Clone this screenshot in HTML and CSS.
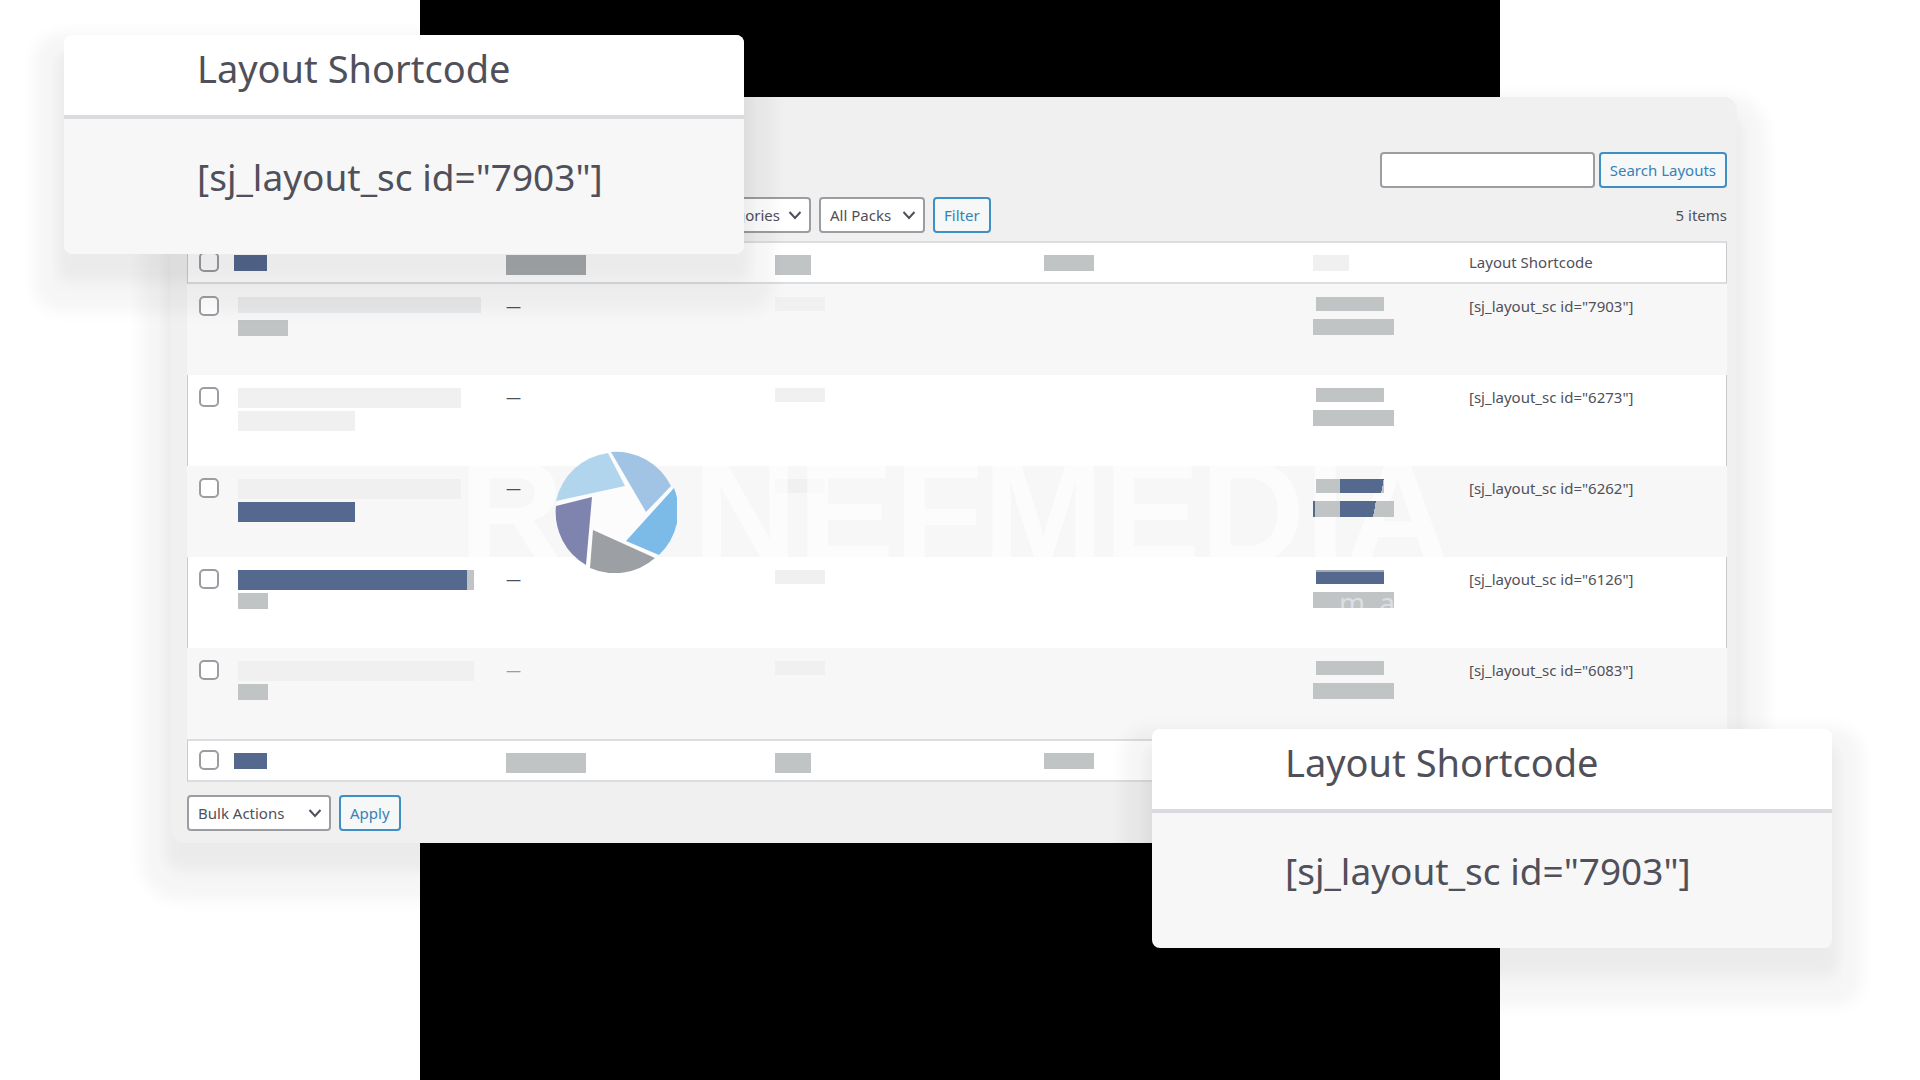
FILE: index.html
```html
<!DOCTYPE html>
<html lang="en">
<head>
  <meta charset="UTF-8" />
  <meta name="viewport" content="width=device-width, initial-scale=1" />
  <title>Layouts</title>
  <link rel="stylesheet" href="styles.css">
</head>
<body>
  <div class="stage">
    <main class="panel">
      <form class="search-box">
        <input type="search" class="search-input" aria-label="Search Layouts">
        <button type="button" class="button">Search Layouts</button>
      </form>

      <div class="tablenav top">
        <div class="actions">
          <select class="select select-categories" aria-label="Filter by category">
            <option>All Categories</option>
          </select>
          <select class="select select-packs" aria-label="Filter by pack">
            <option>All Packs</option>
          </select>
          <button type="button" class="button">Filter</button>
        </div>
        <span class="item-count">5 items</span>
      </div>

      <div class="table-wrap">
        <table class="layouts">
          <colgroup>
            <col class="col-check">
            <col class="col-title">
            <col class="col-main">
            <col class="col-main">
            <col class="col-main">
            <col class="col-date">
            <col>
          </colgroup>
          <thead>
            <tr>
              <td><input type="checkbox" class="check" aria-label="Select all"></td>
              <th><span class="bar blue h16 w33"></span></th>
              <th><span class="bar dark h20 w80"></span></th>
              <th><span class="bar gray h20 w36"></span></th>
              <th><span class="bar gray h16 w50"></span></th>
              <th><span class="bar light h16 w36"></span></th>
              <th>Layout Shortcode</th>
            </tr>
          </thead>
          <tbody>
            <tr>
              <td><input type="checkbox" class="check" aria-label="Select layout 7903"></td>
              <td class="title"><span class="bar shade h16 w243"></span><span class="bar gray h16 w50 low"></span></td>
              <td>—</td>
              <td><span class="bar light h14 w50"></span></td>
              <td></td>
              <td class="date"><span class="bar gray h14 w68"></span><span class="bar gray h16 w81"></span></td>
              <td>[sj_layout_sc id="7903"]</td>
            </tr>
            <tr>
              <td><input type="checkbox" class="check" aria-label="Select layout 6273"></td>
              <td class="title"><span class="bar light h20 w223"></span><span class="bar light h20 w117"></span></td>
              <td>—</td>
              <td><span class="bar light h14 w50"></span></td>
              <td></td>
              <td class="date"><span class="bar gray h14 w68"></span><span class="bar gray h16 w81"></span></td>
              <td>[sj_layout_sc id="6273"]</td>
            </tr>
            <tr>
              <td><input type="checkbox" class="check" aria-label="Select layout 6262"></td>
              <td class="title"><span class="bar light h20 w223"></span><span class="bar blue h20 w117"></span></td>
              <td>—</td>
              <td><span class="bar light h14 w50"></span></td>
              <td></td>
              <td class="date"><span class="bar split-a h14 w68"></span><span class="bar split-b h16 w81"></span></td>
              <td>[sj_layout_sc id="6262"]</td>
            </tr>
            <tr>
              <td><input type="checkbox" class="check" aria-label="Select layout 6126"></td>
              <td class="title"><span class="bar split-end h20 w236"></span><span class="bar gray h16 w30"></span></td>
              <td>—</td>
              <td><span class="bar light h14 w50"></span></td>
              <td></td>
              <td class="date"><span class="bar split-top h14 w68"></span><span class="bar gray h16 w81 tagline"><span>m</span><span>a</span></span></td>
              <td>[sj_layout_sc id="6126"]</td>
            </tr>
            <tr>
              <td><input type="checkbox" class="check" aria-label="Select layout 6083"></td>
              <td class="title"><span class="bar light h20 w236"></span><span class="bar gray h16 w30"></span></td>
              <td class="muted">—</td>
              <td><span class="bar light h14 w50"></span></td>
              <td></td>
              <td class="date"><span class="bar gray h14 w68"></span><span class="bar gray h16 w81"></span></td>
              <td>[sj_layout_sc id="6083"]</td>
            </tr>
          </tbody>
          <tfoot>
            <tr>
              <td><input type="checkbox" class="check" aria-label="Select all"></td>
              <th><span class="bar blue h16 w33"></span></th>
              <th><span class="bar gray h20 w80"></span></th>
              <th><span class="bar gray h20 w36"></span></th>
              <th><span class="bar gray h16 w50"></span></th>
              <th></th>
              <th></th>
            </tr>
          </tfoot>
        </table>

        <div class="watermark">
          <span>R</span>
          <svg class="shutter" viewBox="0 0 122 122" aria-hidden="true">
            <circle cx="61" cy="61" r="60" fill="#fff" fill-opacity="0.6" />
            <path fill="#b2d5ee" d="M53 2 L70 35 L1 50 A61 61 0 0 1 53 2Z" />
            <path fill="#a1c4e4" d="M56 1 A61 61 0 0 1 116 35 L91 61Z" />
            <path fill="#7cbbe7" d="M119 37 A61 61 0 0 1 104 104 L71 90Z" />
            <path fill="#9c9fa3" d="M100 107 A61 61 0 0 1 35 117 L38 79Z" />
            <path fill="#7f84af" d="M31 114 A61 61 0 0 1 1 55 L37 46Z" />
          </svg>
          <span>NEFMEDIA</span>
        </div>
      </div>

      <div class="tablenav bottom">
        <div class="actions">
          <select class="select select-bulk" aria-label="Bulk actions">
            <option>Bulk Actions</option>
          </select>
          <button type="button" class="button">Apply</button>
        </div>
      </div>
    </main>

    <section class="callout callout-top">
      <h2 class="callout-head">Layout Shortcode</h2>
      <p class="callout-body">[sj_layout_sc id="7903"]</p>
    </section>

    <section class="callout callout-bottom">
      <h2 class="callout-head">Layout Shortcode</h2>
      <p class="callout-body">[sj_layout_sc id="7903"]</p>
    </section>
  </div>
</body>
</html>
```
FILE: styles.css
```css
* {
  box-sizing: border-box;
  margin: 0;
  padding: 0;
}

body {
  font-family: "Noto Sans", "Open Sans", sans-serif;
  font-size: 15px;
  line-height: 20px;
  color: #50505a;
  background: #fff;
}

.stage {
  position: relative;
  min-height: 100vh;
  padding: 97px 183px 0 171px;
  background: linear-gradient(#000, #000) center / 56.25% 100% no-repeat;
}

.panel,
.callout {
  box-shadow: 0 22px 12px 6px rgba(0, 0, 0, 0.04),
              0 28px 16px 30px rgba(0, 0, 0, 0.04);
}

.panel {
  padding: 55px 10px 12px 16px;
  background: #f0f0f0;
  border-radius: 14px;
}

/* Controls */
.search-box {
  display: flex;
  justify-content: flex-end;
  gap: 4px;
}

.search-input,
.select,
.button {
  height: 36px;
  font: inherit;
  border-radius: 4px;
}

.search-input {
  width: 215px;
  padding: 0 10px;
  background: #fff;
  border: 2px solid #9a9da2;
}

.button {
  padding: 0 9px;
  color: #3582b8;
  background: #f6f7f7;
  border: 2px solid #3f8fc4;
}

.select {
  appearance: none;
  padding: 0 28px 0 9px;
  color: #50505a;
  border: 2px solid #9a9da2;
  background: #fff url("data:image/svg+xml,%3Csvg xmlns='http://www.w3.org/2000/svg' viewBox='0 0 14 10'%3E%3Cpath d='M1.500 2 7 8l5.500-6' fill='none' stroke='%2350505a' stroke-width='2'/%3E%3C/svg%3E") no-repeat right 7px center / 14px 10px;
}

.select-categories {
  width: 156px;
}

.select-packs {
  width: 106px;
}

.select-bulk {
  width: 144px;
}

.select-categories {
  padding-left: 26px;
}

.tablenav {
  display: flex;
  justify-content: space-between;
  align-items: center;
}

.tablenav.top {
  margin: 9px 0 8px;
}

.tablenav.bottom {
  margin-top: 13px;
}

.actions {
  display: flex;
  gap: 8px;
}

.top .actions {
  padding-left: 468px;
}

/* Table */
.table-wrap {
  position: relative;
}

.layouts {
  width: 100%;
  table-layout: fixed;
  border-spacing: 0;
}

.col-check { width: 47px; }
.col-title { width: 272px; }
.col-main { width: 269px; }
.col-date { width: 156px; }

.layouts th,
.layouts td {
  text-align: left;
  font-weight: 400;
  vertical-align: top;
}

.layouts td:first-child {
  padding-left: 12px;
}

.layouts thead tr,
.layouts tfoot tr {
  height: 43px;
  background: #fff;
}

.layouts thead th,
.layouts thead td,
.layouts tfoot th,
.layouts tfoot td {
  padding-top: 9px;
  border-top: 2px solid #dcdde0;
  border-bottom: 2px solid #dcdde0;
}

.layouts thead th .bar,
.layouts tfoot th .bar {
  margin-top: 3px;
}

.layouts tbody tr {
  height: 91px;
  background: #f7f7f7;
}

.layouts tbody tr:nth-child(even) {
  background: #fff;
}

.layouts tbody td {
  padding-top: 12px;
}

.layouts tbody .bar:first-child {
  margin-top: 1px;
}

.layouts thead td:first-child,
.layouts tfoot td:first-child,
.layouts tbody tr:nth-child(even) td:first-child {
  border-left: 1px solid #c9cacd;
  padding-left: 11px;
}

.layouts thead th:last-child,
.layouts tfoot th:last-child,
.layouts tbody tr:nth-child(even) td:last-child {
  border-right: 1px solid #c9cacd;
}

.layouts .title {
  padding-left: 4px;
}

.layouts .muted {
  color: #9a9da2;
}

.check {
  appearance: none;
  display: block;
  width: 20px;
  height: 20px;
  background: #fff;
  border: 2px solid #9a9da2;
  border-radius: 5px;
}

/* Redacted content */
.bar {
  display: block;
}

.title .bar + .bar {
  margin-top: 3px;
}

.title .bar + .low {
  margin-top: 7px;
}

.date .bar {
  position: relative;
  z-index: 1;
}

.date .bar:first-child {
  margin-left: 3px;
}

.date .bar + .bar {
  margin-top: 8px;
}

.gray { background: #c1c4c5; }
.dark { background: #a8abae; }
.light { background: #f0f0f0; }
.shade { background: #e8e9eb; }
.blue { background: #55698f; }

.split-a {
  background: linear-gradient(90deg, #c1c4c5 36%, transparent 36%), linear-gradient(100deg, #55698f 96%, #c1c4c5 96%);
}

.split-b {
  background: linear-gradient(90deg, #55698f 2px, #c1c4c5 2px, #c1c4c5 33%, transparent 33%), linear-gradient(100deg, #55698f 75%, #c1c4c5 75%);
}

.split-end {
  background: linear-gradient(90deg, #55698f 97%, #c1c4c5 97%);
}

.split-top {
  background: linear-gradient(#a2a9b5 2px, #55698f 2px);
}

.h14 { height: 14px; }
.h16 { height: 16px; }
.h20 { height: 20px; }

.w30 { width: 30px; }
.w33 { width: 33px; }
.w36 { width: 36px; }
.w50 { width: 50px; }
.w68 { width: 68px; }
.w80 { width: 80px; }
.w81 { width: 81px; }
.w117 { width: 117px; }
.w223 { width: 223px; }
.w236 { width: 236px; }
.w243 { width: 243px; }

.tagline {
  display: flex;
  gap: 14px;
  padding-left: 26px;
  overflow: hidden;
  font-size: 28px;
  line-height: 20px;
  color: #dddee4;
}

/* Logo laid over the rows */
.watermark {
  position: absolute;
  top: 210px;
  left: 272px;
  display: flex;
  align-items: center;
  font-family: "Liberation Sans", Arial, sans-serif;
  font-size: 145px;
  font-weight: 700;
  line-height: 122px;
  color: rgba(255, 255, 255, 0.6);
  pointer-events: none;
}

.shutter {
  width: 122px;
  height: 122px;
  margin: 0 16px 0 -9px;
}

/* Zoomed callouts */
.callout {
  position: absolute;
  z-index: 2;
  width: 680px;
  padding-bottom: 40px;
  font-size: 37px;
  white-space: nowrap;
  background: #f7f7f7;
  border-radius: 8px;
}

.callout-top {
  top: 35px;
  left: 64px;
}

.callout-bottom {
  top: 729px;
  right: 88px;
}

.callout-head {
  padding: 9px 40px 23px 133px;
  font-size: 38px;
  font-weight: 400;
  line-height: 48px;
  background: #fff;
  border-bottom: 4px solid #dadbdf;
  border-radius: 8px 8px 0 0;
}

.callout-body {
  padding: 34px 40px 13px 133px;
  line-height: 48px;
}
```
